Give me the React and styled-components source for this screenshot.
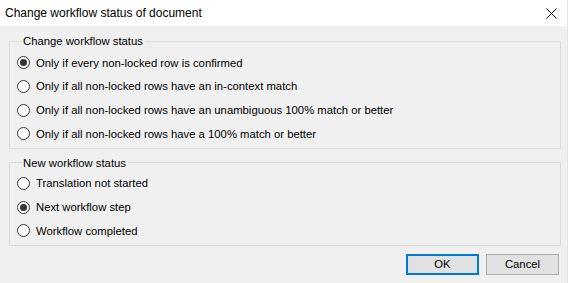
import React, { useState } from 'react';
import styled, { createGlobalStyle, css } from 'styled-components';

const GlobalStyle = createGlobalStyle`
  html, body {
    margin: 0;
    padding: 0;
    background: #f0f0f0;
  }
  * {
    box-sizing: border-box;
  }
`;

const Window = styled.div`
  display: flex;
  flex-direction: column;
  width: 568px;
  height: 283px;
  background: #f0f0f0;
  border-right: 1px solid #e3e3e3;
  font-family: "Liberation Sans", Arial, sans-serif;
  font-size: 11.3px;
  color: #000;
`;

const TitleBar = styled.div`
  display: flex;
  align-items: center;
  height: 26px;
  padding: 0 0 0 5px;
  background: #fff;
  font-size: 12px;
`;

const Title = styled.div`
  flex: 1;
`;

const CloseButton = styled.div`
  display: flex;
  justify-content: center;
  align-items: center;
  width: 30px;
  height: 26px;
  margin-right: 1px;
`;

const Body = styled.div`
  display: flex;
  flex-direction: column;
  flex: 1;
  padding: 8px 6px 0 9px;
`;

const Group = styled.fieldset`
  margin: 0 0 ${({ gap }) => gap || 0}px;
  padding: ${({ top }) => top}px 0 ${({ bottom }) => bottom}px 7px;
  border: 1px solid #dcdcdc;
  min-width: 0;
`;

const Legend = styled.legend`
  margin-left: 5px;
  padding: 0 2px 0 1px;
  line-height: 14px;
`;

const Option = styled.label`
  display: flex;
  align-items: center;
  gap: 6px;
  height: 23.67px;
  cursor: default;
`;

const RadioMark = styled.span`
  display: flex;
  justify-content: center;
  align-items: center;
  width: 13px;
  height: 13px;
  border: 1px solid #333;
  border-radius: 50%;
  background: #fff;
  ${({ checked }) => checked && css`
    &::after {
      content: '';
      width: 7px;
      height: 7px;
      border-radius: 50%;
      background: #333;
    }
  `}
`;

const Footer = styled.div`
  display: flex;
  justify-content: flex-end;
  gap: 7px;
  padding: 8px 2px 0 0;
`;

const Button = styled.div`
  display: flex;
  justify-content: center;
  align-items: center;
  width: 73px;
  height: 21px;
  background: #e1e1e1;
  border: 1px solid #adadad;
  ${({ primary }) => primary && css`
    border: 2px solid #0078d7;
  `}
`;

const conditions = [
  'Only if every non-locked row is confirmed',
  'Only if all non-locked rows have an in-context match',
  'Only if all non-locked rows have an unambiguous 100% match or better',
  'Only if all non-locked rows have a 100% match or better',
];

const statuses = [
  'Translation not started',
  'Next workflow step',
  'Workflow completed',
];

const RadioList = ({ items, value, onChange }) => items.map((item, i) => (
  <Option key={item} onClick={() => onChange(i)}>
    <RadioMark checked={value === i} />
    {item}
  </Option>
));

const App = () => {
  const [condition, setCondition] = useState(0);
  const [status, setStatus] = useState(1);
  return (
    <Window>
      <GlobalStyle />
      <TitleBar>
        <Title>Change workflow status of document</Title>
        <CloseButton>
          <svg width="11" height="11" viewBox="0 0 11 11">
            <path d="M0.5 0.5 L10.5 10.5 M10.5 0.5 L0.5 10.5" stroke="#000" strokeWidth="1" fill="none" />
          </svg>
        </CloseButton>
      </TitleBar>
      <Body>
        <Group top={3} bottom={2} gap={7}>
          <Legend>Change workflow status</Legend>
          <RadioList items={conditions} value={condition} onChange={setCondition} />
        </Group>
        <Group top={2} bottom={2}>
          <Legend>New workflow status</Legend>
          <RadioList items={statuses} value={status} onChange={setStatus} />
        </Group>
        <Footer>
          <Button primary>OK</Button>
          <Button>Cancel</Button>
        </Footer>
      </Body>
    </Window>
  );
};

export default App;
